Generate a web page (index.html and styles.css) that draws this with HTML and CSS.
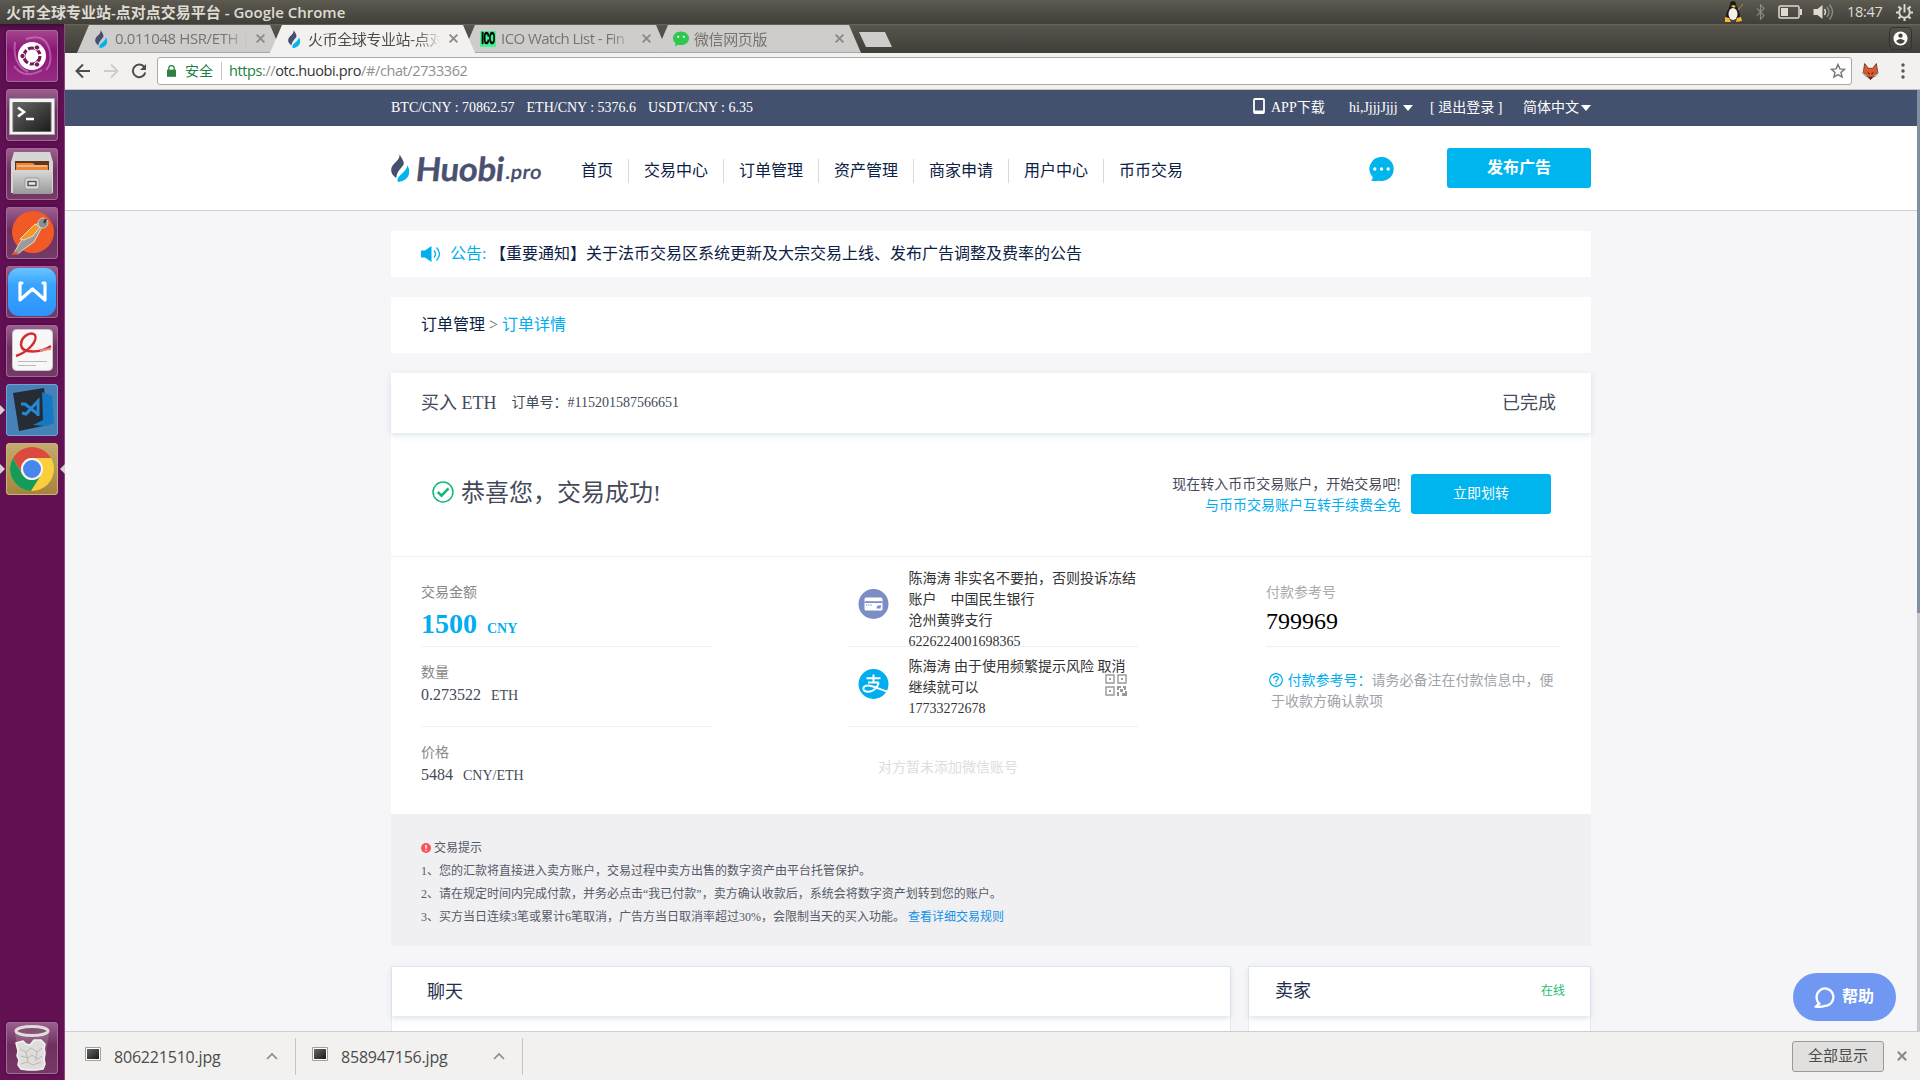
FILE: index.html
```html
<!DOCTYPE html>
<html lang="zh-CN">
<head>
<meta charset="utf-8">
<title>火币全球专业站-点对点交易平台</title>
<link rel="stylesheet" href="styles.css">
</head>
<body>
<svg class="defs" width="0" height="0">
  <defs>
    <linearGradient id="steel" x1="0" y1="0" x2="0" y2="1"><stop offset="0" stop-color="#d8d8d8"/><stop offset="1" stop-color="#999"/></linearGradient>
    <linearGradient id="screen" x1="0" y1="0" x2="1" y2="1"><stop offset="0" stop-color="#666"/><stop offset="1" stop-color="#1b1b1b"/></linearGradient>
    <linearGradient id="wps" x1="0" y1="0" x2="0" y2="1"><stop offset="0" stop-color="#68c5ff"/><stop offset=".35" stop-color="#36a4ff"/><stop offset="1" stop-color="#2f93fa"/></linearGradient>
    <symbol id="flame" viewBox="0 0 18 42" preserveAspectRatio="none">
      <path fill="#454f70" d="M8.600 0C9.600 5 13.400 10.200 12.700 15 12 20 6.600 22.600 5.100 36 1.500 32 0 28 .2 23.500.4 16.600 4.500 13 6.900 8.500 8.100 6 8.800 2.800 8.600 0Z"/>
      <path fill="#00b4ee" d="M16.200 17C18.600 22 18.800 28 17.200 33 15.600 37.800 12 41.500 7 42 5.400 37.500 7.800 33.500 11 29.200 14 25.200 16.200 22 16.200 17Z"/>
    </symbol>
    <symbol id="cross" viewBox="0 0 10 10"><path d="M1.500 1.500l7 7M8.500 1.500l-7 7" fill="none" stroke="#8b8a88" stroke-width="1.700"/></symbol>
    <symbol id="up" viewBox="0 0 12 8"><path d="M1 7l5-5 5 5" fill="none" stroke="#8a8a8a" stroke-width="1.600"/></symbol>
    <symbol id="thumb" viewBox="0 0 16 14"><path fill="#fff" stroke="#a0a0a0" d="M.5.5h15v13H.5z"/><path fill="url(#screen)" d="M2 2h12v10H2z"/></symbol>
  </defs>
</svg>

<header class="panel">
  <div class="panel-title">火币全球专业站-点对点交易平台 - Google Chrome</div>
  <div class="indicators">
    <svg class="tux" viewBox="0 0 20 22"><path fill="#1a1a1a" d="M6 3c0-4 6-4 6 0 0 3 4 7 4 12 0 4-14 4-14 0C2 10 6 7 6 3Z"/><ellipse cx="9" cy="13" rx="4.500" ry="6" fill="#f3f0e8"/><path fill="#f8b832" d="M1 16l4 1 2 4-6 0zM17 16l-4 1-1 4 6-1zM7 5l2-1 3 1-2 2z"/><path stroke="#b88b4b" d="M14 9l5-6"/></svg>
    <svg class="bt" viewBox="0 0 10 18"><path fill="none" stroke="#8e8b84" stroke-width="1.300" d="M1 5l8 8-4 4V1l4 4-8 8"/></svg>
    <svg class="battery" viewBox="0 0 24 14"><rect x="1" y="1" width="20" height="12" rx="1.500" fill="none" stroke="#dfdbd2" stroke-width="1.500"/><path fill="#dfdbd2" d="M3 3h7v8H3zM22 4h2v6h-2z"/></svg>
    <svg class="volume" viewBox="0 0 20 18"><path fill="#dfdbd2" d="M0 6h4l5-4v14l-5-4H0z"/><path fill="none" stroke="#dfdbd2" stroke-width="1.400" d="M11 6q2 3 0 6"/><path fill="none" stroke="#8f8c84" stroke-width="1.400" d="M13.500 4q4 5 0 10M16 1.500q6 7.500 0 15"/></svg>
    <span class="clock">18:47</span>
    <svg class="gear" viewBox="0 0 18 18"><g fill="none" stroke="#dfdbd2"><path stroke-width="2" d="M6 4.200a5.600 5.600 0 1 0 6 0M9 0v9"/><path stroke-width="2.200" d="M0 9h3M15 9h3M9 15v3M2.600 15.400l2-2M15.400 15.400l-2-2M2.600 2.600l2 2M15.400 2.600l-2 2"/></g></svg>
  </div>
</header>

<div class="desktop">
<nav class="launcher">
  <div class="app app-dash"><svg viewBox="0 0 52 52"><path fill="none" stroke="#e6a7d8" stroke-opacity=".45" stroke-width="2" d="M9 12Q6 34 22 42M20 9Q40 2 44 22Q46 34 40 40M8 36Q18 50 36 40"/><circle cx="26" cy="26" r="14" fill="#fff"/><circle cx="26" cy="26" r="8" fill="none" stroke="#761a5c" stroke-width="3.200" stroke-dasharray="14.700 2"/><g fill="#761a5c" stroke="#fff"><circle cx="16.500" cy="26" r="2.700"/><circle cx="31" cy="17.500" r="2.700"/><circle cx="31" cy="34.500" r="2.700"/></g></svg></div>
  <div class="app"><svg viewBox="0 0 52 52"><path fill="#f4f4f2" stroke="#aaa" d="M3.500 9.500h45v36h-45z"/><path fill="url(#screen)" stroke="#666" d="M7 13.500h38v29H7z"/><path fill="none" stroke="#fff" stroke-width="2.600" d="M12 18.500l6 4.500-6 4.500M20 30h8"/></svg></div>
  <div class="app"><svg viewBox="0 0 52 52"><path fill="#d6d6d4" d="M8 4h36l3 10v31H5V14z"/><path fill="#5e3422" d="M9 13h34v11H9z"/><path fill="#e78839" d="M10 15h17l2 2h13v7H10z"/><path stroke="#ffe0b5" d="M11 18h30"/><path fill="url(#steel)" d="M7 22h39v24H7z"/><rect x="19" y="30" width="14" height="11" rx="2" fill="#ddd" stroke="#999"/><path fill="#eee" stroke="#555" stroke-width="1.500" d="M22 33.500h8v4h-8z"/></svg></div>
  <div class="app"><svg viewBox="0 0 52 52"><circle cx="27" cy="25" r="21" fill="#f15a24"/><path fill="#9b9b9b" stroke="#eee" stroke-width=".8" d="M32 16l4 4-8 15-10 7-6 5-4-1 5-9 8-12z"/><path fill="#f6971e" stroke="#eee" stroke-width=".8" d="M29 17l5 3-7 9-9 4-4-1z"/><circle cx="37" cy="16" r="5" fill="#8c8c8c" stroke="#ccc"/><path d="M38 16l2-4" stroke="#333" stroke-width="2"/><path fill="#f15a24" d="M5 48l5-4 3 3z"/></svg></div>
  <div class="app"><svg viewBox="0 0 52 52"><rect x="2" y="2" width="48" height="48" rx="11" fill="url(#wps)"/><path fill="none" stroke="#fff" stroke-width="3.200" stroke-linejoin="round" stroke-linecap="round" d="M16 17h-2v17l12.500-11L39 34V17h-2"/></svg></div>
  <div class="app"><svg viewBox="0 0 52 52"><rect x="6.500" y="4.500" width="40" height="41" rx="4" fill="#f7f7f7" stroke="#c9c9c9"/><path fill="none" stroke="#d42b2d" stroke-width="2.400" d="M10 31C22 27 32 16 29 10 25 6 15 11 15 20 16 29 35 28 45 21"/><path stroke="#e98a8a" stroke-width="2" d="M34 26q6-2 11-2" fill="none"/><path stroke="#bbb" d="M12 36.500h29M12 40.500h18"/></svg></div>
  <div class="app app-code running"><svg viewBox="0 0 52 52"><path fill="#252c34" d="M7 9l31-5 4 37-29 6z"/><path fill="#1478c4" d="M36 8l10 4 2 27-8 3-13-1 10-5z"/><path fill="none" stroke="#2389d6" stroke-width="3" d="M15 20l4 0 14 11M16 29l4 1 12-13v15"/></svg></div>
  <div class="app app-chrome running focused"><svg viewBox="0 0 52 52"><circle cx="26" cy="26" r="22" fill="#fbcf3c"/><path fill="#db4a3f" d="M7 15A22 22 0 0 1 45 15H26A11 11 0 0 0 16 31z"/><path fill="#169c5a" d="M7 15A22 22 0 0 0 25 48L35 32A11 11 0 0 1 16 31z"/><circle cx="26" cy="26" r="10" fill="#4886ef" stroke="#f4f4f4" stroke-width="2"/></svg></div>
  <div class="app app-trash"><svg viewBox="0 0 52 52"><path fill="#d9c3d5" fill-opacity=".22" d="M9 10h34l-5 38H14z"/><path fill="#deddda" stroke="#f3f3f1" stroke-width="1.500" stroke-linejoin="round" d="M10 21l7-2 3 3 4 1 4-5 7 0 4 4-1 5 1 4-1 6 1 5-2 5-7 1-8 0-7-1-3-4 1-5-2-4 1-5z"/><path fill="none" stroke="#b9b8b5" d="M14 27l6 3 5-4 6 4 5-4M15 34l7 2 4-3 6 4 4-3M15 42l6-2 6 3 8-3M20 30l2 10M31 29l-1 10"/><ellipse cx="26" cy="9" rx="16" ry="4.500" fill="#845377" stroke="#deddd9" stroke-width="3"/></svg></div>
</nav>

<main class="browser">
  <div class="tabstrip">
    <div class="tab"><svg class="fav fav-flame" viewBox="0 0 18 42" preserveAspectRatio="none"><use href="#flame"/></svg><span class="tab-text">0.011048 HSR/ETH |</span><svg class="close"><use href="#cross"/></svg></div>
    <div class="tab active"><svg class="fav fav-flame" viewBox="0 0 18 42" preserveAspectRatio="none"><use href="#flame"/></svg><span class="tab-text">火币全球专业站-点对</span><svg class="close"><use href="#cross"/></svg></div>
    <div class="tab"><span class="fav ico"><b>ICO</b></span><span class="tab-text tight">ICO Watch List - Fin</span><svg class="close"><use href="#cross"/></svg></div>
    <div class="tab"><svg class="fav" viewBox="0 0 16 16"><path fill="#2dc84d" d="M8 .5c4.500 0 8 2.800 8 6.800s-3.500 6.800-8 6.800c-1 0-2-.1-2.800-.4L2 15.500l.5-3.300C1 11 0 9.300 0 7.300 0 3.300 3.500.5 8 .5Z"/><circle cx="5.200" cy="5.800" r="1.100" fill="#fff"/><circle cx="10.800" cy="5.800" r="1.100" fill="#fff"/></svg><span class="tab-text">微信网页版</span><svg class="close"><use href="#cross"/></svg></div>
    <div class="newtab"></div>
    <div class="avatar"><svg viewBox="0 0 16 16"><circle cx="8" cy="8" r="7.500" fill="#fff"/><circle cx="8" cy="5" r="2.300" fill="#45433e"/><path fill="#45433e" d="M3.500 10.500q4.500-4 9 0-1 3-4.500 3t-4.500-3Z"/></svg></div>
  </div>

  <div class="toolbar">
    <div class="navbtns">
      <svg viewBox="0 0 16 16"><path fill="none" stroke="#4d4d4d" stroke-width="2" d="M15 8H2M8 1.500L1.500 8 8 14.500"/></svg>
      <svg viewBox="0 0 16 16"><path fill="none" stroke="#cfcdca" stroke-width="2" d="M1 8h13M8 1.500L14.500 8 8 14.500"/></svg>
      <svg viewBox="0 0 16 16"><path fill="none" stroke="#4d4d4d" stroke-width="2" d="M13.300 4.200A6.300 6.300 0 1 0 14.300 9.500"/><path fill="#4d4d4d" d="M15 1v6H9z"/></svg>
    </div>
    <div class="omnibox">
      <svg class="lock" viewBox="0 0 10 13"><path fill="#338047" d="M0 5h10v8H0z"/><path fill="none" stroke="#338047" stroke-width="1.500" d="M2 6V3.500a3 3 0 0 1 6 0V6"/></svg>
      <span class="secure">安全</span>
      <span class="url"><span class="scheme">https</span>://<span class="host">otc.huobi.pro</span>/#/chat/2733362</span>
      <svg class="star" viewBox="0 0 16 16"><path fill="none" stroke="#757575" stroke-width="1.400" d="M8 1.500l1.900 4.400 4.600.4-3.500 3.100 1.100 4.600L8 11.600 3.900 14 5 9.400 1.500 6.300l4.600-.4z"/></svg>
    </div>
    <svg class="fox" viewBox="0 0 16 16"><path fill="#e2582a" stroke="#4a2f28" stroke-width=".7" d="M2.500.5L6 5h4L13.500.5l1.200 7.500L12 12l-4 3.500L4 12 1.300 8z"/><path fill="#46302a" d="M4.500 7.500l3 2.500-1 1zM11.500 7.500l-3 2.500 1 1zM6 13h4l-2 3z"/><path fill="#f4ede6" stroke="#4a2f28" stroke-width=".5" d="M.5 9l4.500 2.500L4 13zM15.500 9L11 11.500l1 1.500z"/></svg>
    <svg class="menu" viewBox="0 0 4 16"><g fill="#555"><circle cx="2" cy="2" r="1.700"/><circle cx="2" cy="8" r="1.700"/><circle cx="2" cy="14" r="1.700"/></g></svg>
  </div>

  <div class="viewport">
  <div class="page">
    <div class="topbar"><div class="wrap">
      <span class="rate">BTC/CNY : 70862.57</span><span class="rate">ETH/CNY : 5376.6</span><span class="rate">USDT/CNY : 6.35</span>
      <svg class="phone" viewBox="0 0 12 16"><rect x="1" y="1" width="10" height="14" rx="1" fill="none" stroke="#fff" stroke-width="1.800"/><path fill="#fff" d="M1 12.500h10V15H1z"/></svg>
      <span class="app-dl">APP下载</span><span class="user">hi,JjjjJjjj</span><i class="caret"></i><span class="logout">[ 退出登录 ]</span><span class="lang">简体中文</span><i class="caret lang-caret"></i>
    </div></div>

    <div class="header"><div class="wrap">
      <div class="logo"><svg class="logo-mark" viewBox="0 0 18 42" preserveAspectRatio="none"><use href="#flame"/></svg><span class="logo-name">Huobi</span><span class="logo-pro">.pro</span></div>
      <div class="nav"><a>首页</a><a>交易中心</a><a>订单管理</a><a>资产管理</a><a>商家申请</a><a>用户中心</a><a>币币交易</a></div>
      <svg class="chat-icon" viewBox="0 0 24 24"><path fill="#00b4ee" d="M12 0a12 12 0 1 1-2 23.800Q5 24.400 1 23.600q2.500-1 2.200-3.400A12 12 0 0 1 12 0Z"/><g fill="#fff"><circle cx="5.300" cy="12" r="1.700"/><circle cx="12" cy="12" r="1.700"/><circle cx="18.700" cy="12" r="1.700"/></g></svg>
      <div class="publish">发布广告</div>
    </div></div>

    <div class="content">
      <section class="notice">
        <svg viewBox="0 0 20 16"><path fill="#00aeef" d="M0 4.500h4L10.500 0v16L4 11.500H0z"/><path fill="none" stroke="#00aeef" stroke-width="1.300" d="M13 4.500q3 3.500 0 7M15.500 1.500q6 6.500 0 13"/></svg>
        <span class="notice-label">公告:</span><span>【重要通知】关于法币交易区系统更新及大宗交易上线、发布广告调整及费率的公告</span>
      </section>
      <section class="crumbs"><span>订单管理</span><i>&gt;</i><a>订单详情</a></section>

      <section class="order">
        <div class="order-head"><span class="order-title">买入 ETH</span><span class="order-no">订单号：#115201587566651</span><span class="order-state">已完成</span></div>
        <div class="result">
          <svg viewBox="0 0 22 22"><circle cx="11" cy="11" r="10" fill="none" stroke="#12b979" stroke-width="1.500"/><path fill="none" stroke="#12b979" stroke-width="2.600" d="M5.800 11l3.700 3.700 7-7.400"/></svg>
          <span class="result-text">恭喜您，交易成功!</span>
          <div class="result-note"><div>现在转入币币交易账户，开始交易吧!</div><a>与币币交易账户互转手续费全免</a></div>
          <div class="transfer">立即划转</div>
        </div>
        <div class="info">
          <div class="col">
            <div class="row first"><div class="label">交易金额</div><div class="amount">1500<small>CNY</small></div></div>
            <div class="row"><div class="label">数量</div><div class="value">0.273522<small>ETH</small></div></div>
            <div class="row last"><div class="label">价格</div><div class="value">5484<small>CNY/ETH</small></div></div>
          </div>
          <div class="col pay">
            <div class="row first pay-row">
              <svg class="pay-icon" viewBox="0 0 30 30"><circle cx="15" cy="15" r="15" fill="#7c8cc4"/><rect x="6" y="8.500" width="18" height="13" rx="1.500" fill="#fff"/><path fill="#7c8cc4" d="M6 12.200h18v1.800H6zM7.500 15.500h1.300v1H7.500zM9.700 15.500H11v1H9.700zM12 15.500h1.300v1H12zM18.500 17l4-1-.5 3.500h-4z"/></svg>
              <div class="pay-text">陈海涛 非实名不要拍，否则投诉冻结<br>账户　中国民生银行<br>沧州黄骅支行<br>6226224001698365</div>
            </div>
            <div class="row pay-row">
              <svg class="pay-icon" viewBox="0 0 30 30"><circle cx="15" cy="15" r="15" fill="#00aeef"/><path fill="none" stroke="#fff" stroke-width="2" d="M8 9.300h14M9.500 13.500h10.800M15 5.500v8M20.300 13.500c-1 4-4.800 9.300-10.300 9.300-6.500 0-7-6.300-.5-6.300 5.500 0 10 3.500 19.500 6.200"/></svg>
              <div class="pay-text">陈海涛 由于使用频繁提示风险 取消<br>继续就可以<br>17733272678</div>
              <svg class="qr" viewBox="0 0 22 22"><g fill="none" stroke="#999" stroke-width="1.400"><path d="M1 1h8v8H1zM13 1h8v8h-8zM1 13h8v8H1z"/></g><path fill="#999" d="M4 4h2v2H4zM16 4h2v2h-2zM4 16h2v2H4zM12 12h4v2h-2v2h-2zM18 12h3v4h-2v-2h-1zM15 15h3v3h-3zM12 18h2v4h-2zM17 19h3v-2h2v5h-5z"/></svg>
            </div>
            <div class="row last wechat">对方暂未添加微信账号</div>
          </div>
          <div class="col ref">
            <div class="row first"><div class="label ref-label">付款参考号</div><div class="ref-no">799969</div></div>
            <div class="hint"><svg viewBox="0 0 14 14"><circle cx="7" cy="7" r="6.300" fill="none" stroke="#00aeef" stroke-width="1.200"/><path fill="none" stroke="#00aeef" stroke-width="1.300" d="M4.800 5.600c0-3 4.500-2.800 4.500-.3C9.300 6.900 7 7 7 8.700M7 9.800v1.400"/></svg><b>付款参考号：</b>请务必备注在付款信息中，便<br>于收款方确认款项</div>
          </div>
        </div>
        <div class="tips">
          <div class="tips-title"><svg viewBox="0 0 10 10"><circle cx="5" cy="5" r="5" fill="#fb5454"/><path stroke="#fff" stroke-width="1.400" d="M5 2v3.700M5 6.700v1.400"/></svg>交易提示</div>
          <div>1、您的汇款将直接进入卖方账户，交易过程中卖方出售的数字资产由平台托管保护。</div>
          <div>2、请在规定时间内完成付款，并务必点击“我已付款”，卖方确认收款后，系统会将数字资产划转到您的账户。</div>
          <div>3、买方当日连续3笔或累计6笔取消，广告方当日取消率超过30%，会限制当天的买入功能。 <a>查看详细交易规则</a></div>
        </div>
      </section>

      <div class="bottom">
        <section class="card chat-card"><div class="card-head">聊天</div></section>
        <section class="card seller-card"><div class="card-head">卖家<span>在线</span></div></section>
      </div>
    </div>
  </div>
  <div class="scrollbar"></div>
  <div class="help"><svg viewBox="0 0 20 20"><path fill="none" stroke="#fff" stroke-width="2.200" d="M6 16.600A8 8.300 0 1 1 10.500 18Q6 19.300 2 18.600L4.600 15.800"/></svg><span>帮助</span></div>
  </div>

  <footer class="downloads">
    <div class="dl"><svg class="thumb"><use href="#thumb"/></svg><span>806221510.jpg</span><svg class="up"><use href="#up"/></svg></div>
    <div class="dl"><svg class="thumb"><use href="#thumb"/></svg><span>858947156.jpg</span><svg class="up"><use href="#up"/></svg></div>
    <div class="show-all">全部显示</div>
    <svg class="shelf-close"><use href="#cross"/></svg>
  </footer>
</main>
</div>
</body>
</html>
```
FILE: styles.css
```css
* { box-sizing: border-box; }
html, body { margin: 0; height: 100%; overflow: hidden; }
body { width: 1920px; height: 1080px; display: flex; flex-direction: column; font-family: "Liberation Serif", "Noto Sans CJK SC", serif; font-size: 14px; color: #454a59; }
svg { display: block; flex: none; }
i { font-style: normal; }
span, a { white-space: nowrap; }
.defs { position: absolute; }

/* desktop panel */
.panel { height: 24px; flex: none; display: flex; justify-content: space-between; padding: 0 7px 0 6px; background: linear-gradient(#5f5c50 0, #5a574e 2px, #403f3a 24px); color: #dfdbd2; font-family: "Open Sans", "Noto Sans CJK SC", sans-serif; line-height: 24px; }
.panel-title { font-size: 15px; font-weight: 600; white-space: nowrap; line-height: 25px; }
.indicators { display: flex; align-items: center; }
.tux { width: 20px; height: 22px; margin-right: 12px; }
.bt { width: 9px; height: 16px; margin-right: 13px; }
.battery { width: 24px; height: 14px; margin-right: 11px; }
.volume { width: 21px; height: 18px; margin-right: 13px; }
.clock { font-size: 14.5px; width: 36px; margin-right: 13px; letter-spacing: -.3px; }
.gear { width: 17px; height: 17px; }

.desktop { flex: 1; display: flex; min-height: 0; }
.launcher { width: 65px; flex: none; display: flex; flex-direction: column; gap: 7px; padding: 6px 0 6px 6px; background: linear-gradient(#3d0d33 0, #5f0f52 5px, #641153); border-right: 1px solid #8a4a7e; }
.app { position: relative; width: 52px; height: 52px; border-radius: 4px; background: linear-gradient(#9d6091 0, #70305f 45%, #753a68); box-shadow: inset 0 0 0 1px #a06c96, 0 0 3px #430739; }
.app svg { width: 52px; height: 52px; }
.app-dash { background: linear-gradient(#a6468e, #8b1479 40%, #962d83); }
.app-code { background: #4681b8; box-shadow: inset 0 0 0 1px #72a1cd; }
.app-chrome { background: linear-gradient(#c5ab70, #a6833a); box-shadow: inset 0 0 0 1px #c9b27c; }
.app-trash { margin-top: auto; }
.running::before { content: ""; position: absolute; left: -6px; top: 21px; border: 5px solid transparent; border-left-color: #d6cfd4; border-right: 0; }
.focused::after { content: ""; position: absolute; right: -7px; top: 21px; border: 5px solid transparent; border-right-color: #d6cfd4; border-left: 0; }

/* browser chrome */
.browser { flex: 1; min-width: 0; display: flex; flex-direction: column; }
.tabstrip { height: 29px; flex: none; display: flex; padding: 1px 8px 0 12px; background: linear-gradient(#6e6655 0, #57544c 2px, #403f3a 28px); font-family: "Open Sans", "Noto Sans CJK SC", sans-serif; }
.tab { width: 205px; height: 28px; margin-right: -12px; padding: 0 16px 0 17px; display: flex; align-items: center; clip-path: polygon(12px 0, 193px 0, 205px 28px, 0 28px); background: #cfcdcb; border-bottom: 1px solid #aaa8a6; color: #77746f; font-size: 15px; }
.tab.active { position: relative; z-index: 1; background: #f2f1ef; border-color: #f2f1ef; color: #4c4c4c; }
.tab .fav { width: 16px; height: 16px; margin-right: 5px; flex: none; }
.tab .fav-flame { width: 12px; height: 18px; margin: 0 8px 0 1px; }
.ico { background: #4bf096; color: #000; display: grid; place-items: center; }
.ico b { font: bold 9px/12px "Roboto", sans-serif; letter-spacing: -.4px; transform: scaleY(1.8); -webkit-text-stroke: .4px #000; }
.tab-text { flex: 1; margin-top: -1px; overflow: hidden; letter-spacing: -.4px; -webkit-mask-image: linear-gradient(90deg, #000 82%, transparent 100%); }
.tab-text.tight { letter-spacing: -.55px; }
.close { width: 11px; height: 11px; margin-left: 7px; }
.newtab { width: 33px; height: 15px; margin: 7px 0 0 10px; background: #cfcdcb; clip-path: polygon(0 0, 26px 0, 33px 15px, 7px 15px); }
.avatar { width: 23px; height: 23px; margin: 2px 0 0 auto; border: 1px solid #35332f; border-radius: 4px; display: grid; place-items: center; }
.avatar svg { width: 15px; height: 15px; }

.toolbar { height: 37px; flex: none; display: flex; align-items: center; background: #f2f1ef; border-bottom: 1px solid #c3c3c1; font-family: "Open Sans", "Noto Sans CJK SC", sans-serif; }
.navbtns { display: flex; gap: 12px; width: 92px; padding-left: 10px; }
.navbtns svg { width: 16px; height: 16px; }
.omnibox { width: 1695px; height: 28px; border: 1px solid #aaa8a6; border-radius: 3px; background: #fff; display: flex; align-items: center; padding: 0 5px 0 9px; }
.lock { width: 9px; height: 12px; }
.secure { margin-left: 9px; padding-right: 8px; border-right: 1px solid #c5c5c5; line-height: 18px; color: #1a8044; font-size: 14px; }
.url { margin-left: 7px; margin-top: -1px; font-size: 14.5px; color: #909090; letter-spacing: -.4px; }
.scheme { color: #1a8044; }
.host { color: #333; }
.star { width: 16px; height: 16px; margin-left: auto; }
.fox { width: 17px; height: 17px; margin-left: 10px; }
.menu { width: 4px; height: 16px; margin-left: 22px; }

/* page */
.viewport { position: relative; flex: 1; min-height: 0; display: flex; background: #f6f6f9; overflow: hidden; }
.page { width: 1852px; flex: none; }
.scrollbar { width: 3px; background: linear-gradient(#8190a0 523px, #c9c9cb 523px); }
.wrap { width: 1200px; margin: 0 auto; display: flex; align-items: center; height: 100%; }
.topbar { height: 36px; background: #44516e; color: #fff; line-height: 36px; }
.rate { margin-right: 12px; }
.phone { width: 12px; height: 16px; margin: -4px 6px 0 auto; }
.app-dl { width: 78px; }
.user { width: 54px; }
.caret { border: 5px solid transparent; border-top: 6px solid #fff; border-bottom: 0; }
.logout { width: 93px; margin-left: 17px; }
.lang-caret { margin-left: 2px; }
.header { height: 85px; background: #fff; border-bottom: 1px solid #cfcfd2; }
.header .wrap { align-items: flex-start; }
.logo { width: 175px; height: 40px; margin-top: 28px; display: flex; align-items: baseline; color: #4a5070; font-family: "Lato", "Open Sans", sans-serif; font-weight: 700; }
.logo-mark { width: 18px; height: 28px; margin-right: 7px; align-self: flex-start; }
.logo-name { font-size: 33px; line-height: 28px; letter-spacing: -.3px; transform: skewX(-6deg); -webkit-text-stroke: .4px #4a5070; }
.logo-pro { font-size: 20px; line-height: 20px; letter-spacing: .4px; transform: translateY(-2px) skewX(-8deg); margin-left: 2px; }
.nav { display: flex; margin-top: 33px; font-size: 16px; color: #0d2144; }
.nav a { padding: 0 15px; line-height: 24px; height: 24px; border-left: 1px solid #cfdbe6; }
.nav a:first-child { border-left: 0; }
.chat-icon { width: 25px; height: 24px; margin: 31px 53px 0 auto; }
.publish { width: 144px; height: 40px; margin-top: 22px; border-radius: 3px; background: #00b4ee; color: #fff; font-size: 16px; font-weight: 700; line-height: 39px; text-align: center; }
.content { width: 1200px; margin: 20px auto 0; }
.notice { height: 46px; background: #fff; display: flex; align-items: center; padding: 0 30px; font-size: 16px; line-height: 20px; color: #0d2144; }
.notice svg { width: 20px; height: 16px; margin-right: 9px; }
.notice-label { width: 40px; color: #00aeef; }
.crumbs { height: 56px; margin-top: 20px; padding: 0 30px; background: #fff; font-size: 16px; line-height: 55px; color: #0d2144; display: flex; gap: 4px; }
.crumbs i { color: #666; }
.crumbs a { color: #00aeef; }

.order { margin-top: 20px; background: #fff; }
.order-head { position: relative; height: 60px; padding: 0 35px 0 30px; display: flex; line-height: 60px; background: #fff; box-shadow: 0 2px 6px rgba(130,160,180,.3); }
.order-title, .order-state { font-size: 18px; line-height: 61px; }
.order-no { margin-left: 15px; }
.order-state { margin-left: auto; }
.result { height: 124px; border-bottom: 1px solid #efefef; display: flex; align-items: flex-start; padding: 41px 40px 0 41px; }
.result svg { width: 22px; height: 22px; margin-top: 7px; }
.result-text { margin: 1px 0 0 7px; font-size: 24px; line-height: 36px; }
.result-note { margin-left: auto; text-align: right; line-height: 21px; }
.result-note a { color: #00aeef; }
.transfer { width: 140px; height: 40px; margin-left: 10px; border-radius: 3px; background: #00b4ee; color: #fff; text-align: center; line-height: 39px; }
.info { height: 257px; display: grid; grid-template-columns: 292px 553px 295px; padding-left: 30px; }
.pay { margin-left: 136px; width: 289px; }
.row { height: 80px; padding-top: 16px; border-bottom: 1px solid #f0f0f0; }
.row.first { height: 90px; padding-top: 26px; }
.row.last { border: 0; }
.label { line-height: 20px; color: #888; }
.amount { font-size: 28px; font-weight: 700; color: #00aeef; line-height: 42px; }
.value { font-size: 16px; line-height: 24px; }
small { font-size: 14px; margin-left: 10px; }
.row.pay-row { display: flex; padding: 9px 0 0 9px; }
.row.pay-row.first { padding-top: 11px; }
.pay-icon { width: 31px; height: 30px; margin: 13px 19.5px 0 0; }
.first .pay-icon { margin-top: 21px; }
.pay-text { width: 196.5px; line-height: 21px; white-space: nowrap; color: #333; }
.qr { width: 22px; height: 22px; margin-top: 18px; }
.wechat { padding-left: 29px; line-height: 50px; color: #ddd; }
.ref-label { color: #aaa; }
.ref-no { font-size: 24px; line-height: 36px; color: #000; }
.hint { margin-top: 23px; padding-left: 5px; line-height: 21px; color: #a0a3aa; white-space: nowrap; }
.hint svg { display: inline-block; width: 14px; height: 14px; margin: 0 4.5px 0 -2px; vertical-align: -2px; }
.hint b { font-weight: 400; color: #00aeef; }
.tips { height: 132px; background: #f0f0f2; padding: 23px 30px; font-size: 12px; line-height: 23px; color: #555a68; }
.tips-title { display: flex; align-items: center; }
.tips-title svg { width: 10px; height: 10px; margin: -1px 3px 0 0; }
.tips a { color: #1590e9; }
.bottom { display: flex; justify-content: space-between; margin-top: 20px; }
.card { height: 120px; background: #fff; border: 1px solid #e4ecf3; }
.chat-card { width: 840px; }
.seller-card { width: 343px; }
.card-head { height: 49px; display: flex; justify-content: space-between; padding: 0 25px 0 26px; line-height: 48px; font-size: 18px; color: #242c4b; box-shadow: 0 2px 6px rgba(130,160,180,.3); }
.chat-card .card-head { padding-left: 35px; line-height: 50px; }
.card-head span { font-size: 12px; color: #1cbc73; }
.help { position: absolute; right: 24px; bottom: 10px; width: 103px; height: 48px; border-radius: 24px; background: #7097f1; color: #fff; font-weight: 700; font-size: 16px; line-height: 20px; display: flex; align-items: center; padding-left: 21px; gap: 7px; }
.help svg { width: 21px; height: 21px; }

.downloads { height: 49px; flex: none; display: flex; align-items: center; border-top: 1px solid #cfcfcd; background: #f2f1ef; font-family: "Open Sans", "Noto Sans CJK SC", sans-serif; color: #4b4b4b; }
.dl { width: 227px; height: 37px; display: flex; align-items: center; padding: 0 17px 0 16px; border-right: 1px solid #c5c5c3; font-size: 16px; }
.dl:first-child { width: 231px; padding-left: 20px; }
.thumb { width: 16px; height: 14px; margin: -4px 13px 0 0; }
.dl span { letter-spacing: -.2px; margin-top: 1px; }
.up { width: 12px; height: 8px; margin-left: auto; }
.show-all { width: 92px; height: 31px; margin-left: auto; border: 1px solid #999; border-radius: 3px; background: #e1e0de; line-height: 27px; text-align: center; font-size: 15px; }
.shelf-close { width: 12px; height: 12px; margin: 0 12px 0 12px; }
```
